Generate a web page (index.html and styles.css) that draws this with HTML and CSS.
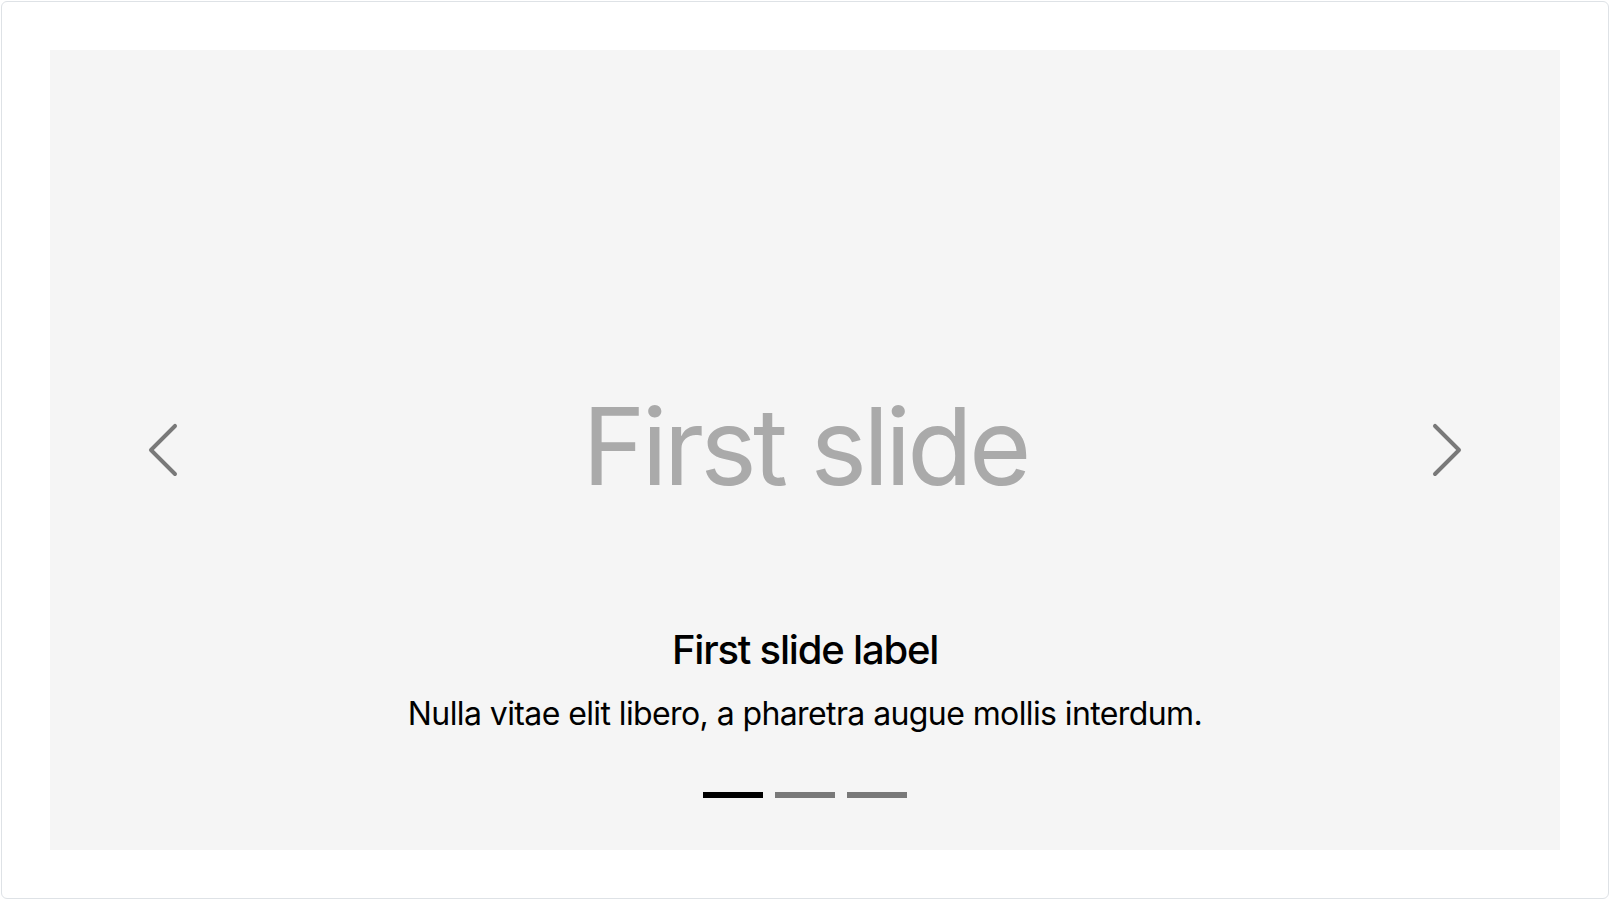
FILE: index.html
```html
<!DOCTYPE html>
<html lang="en">
<head>
<meta charset="utf-8">
<title>Carousel</title>
<link rel="stylesheet" href="styles.css">
</head>
<body>
<div class="frame">
  <div class="carousel">
    <div class="slide">
      <span class="slide-title">First slide</span>
    </div>
    <button class="control control-prev" type="button" aria-label="Previous">
      <svg class="control-icon" viewBox="0 0 16 16" width="64" height="64"><path fill="#000" d="M11.354 1.646a.5.5 0 0 1 0 .708L5.707 8l5.647 5.646a.5.5 0 0 1-.708.708l-6-6a.5.5 0 0 1 0-.708l6-6a.5.5 0 0 1 .708 0z"/></svg>
    </button>
    <button class="control control-next" type="button" aria-label="Next">
      <svg class="control-icon" viewBox="0 0 16 16" width="64" height="64"><path fill="#000" d="M4.646 1.646a.5.5 0 0 1 .708 0l6 6a.5.5 0 0 1 0 .708l-6 6a.5.5 0 0 1-.708-.708L10.293 8 4.646 2.354a.5.5 0 0 1 0-.708z"/></svg>
    </button>
    <div class="caption">
      <h5 class="caption-title">First slide label</h5>
      <p class="caption-text">Nulla vitae elit libero, a pharetra augue mollis interdum.</p>
    </div>
    <div class="indicators">
      <span class="indicator active"></span>
      <span class="indicator"></span>
      <span class="indicator"></span>
    </div>
  </div>
</div>
</body>
</html>
```
FILE: styles.css
```css
* { box-sizing: border-box; }
html, body { margin: 0; }
body {
  padding: 1px;
  background: #fff;
  font-family: Inter, "Noto Sans", "Liberation Sans", sans-serif;
  color: #000;
}
.frame {
  border: 1px solid #dee2e6;
  border-radius: 6px;
  padding: 48px;
}
.carousel {
  position: relative;
  height: 800px;
  background: #f5f5f5;
  overflow: hidden;
}
.slide {
  height: 100%;
  display: flex;
  align-items: center;
  justify-content: center;
}
.slide-title {
  font-size: 107px;
  line-height: 1;
  color: #aaa;
  letter-spacing: -3.8px;
  position: relative;
  top: -4px;
}
.control {
  position: absolute;
  top: 0;
  bottom: 0;
  width: 15%;
  display: flex;
  align-items: center;
  justify-content: center;
  border: 0;
  padding: 0;
  background: none;
  opacity: .5;
  cursor: pointer;
}
.control-prev { left: 0; }
.control-next { right: 0; }
.control-icon { display: block; }
.caption {
  position: absolute;
  left: 15%;
  right: 15%;
  bottom: 40px;
  padding: 40px 0;
  text-align: center;
  color: #000;
}
.caption-title {
  margin: 0 0 16px;
  font-size: 40px;
  font-weight: 500;
  line-height: 1.2;
  letter-spacing: -1.2px;
}
.caption-text {
  margin: 0 0 32px;
  font-size: 32px;
  line-height: 1.5;
  letter-spacing: -0.6px;
}
.indicators {
  position: absolute;
  left: 0;
  right: 0;
  bottom: 0;
  margin-bottom: 32px;
  display: flex;
  justify-content: center;
}
.indicator {
  display: block;
  width: 60px;
  height: 46px;
  margin: 0 6px;
  border-top: 20px solid transparent;
  border-bottom: 20px solid transparent;
  background: #000;
  background-clip: padding-box;
  opacity: .5;
}
.indicator.active { opacity: 1; }
```
